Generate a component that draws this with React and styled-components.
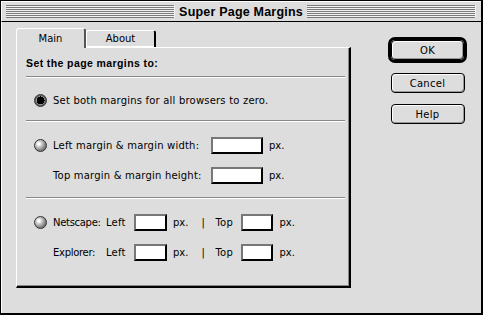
import React from 'react'
import styled, { createGlobalStyle } from 'styled-components'

const Global = createGlobalStyle`
  html, body { margin: 0; padding: 0; background: #dddddd; }
  * { box-sizing: border-box; }
`

const Window = styled.div`
  width: 483px;
  height: 315px;
  background: #dddddd;
  border: 1px solid #000;
  border-right-width: 2px;
  border-bottom-width: 2px;
  display: flex;
  flex-direction: column;
  font-family: "DejaVu Sans", "Liberation Sans", sans-serif;
  font-size: 10px;
  color: #000;
`
const TitleBar = styled.div`
  height: 21px;
  display: flex;
  align-items: center;
  gap: 4px;
  padding: 0 5px 0 4px;
  border-bottom: 1px solid #000;
  border-top: 1px solid #fff;
  border-left: 1px solid #fff;
`
const Stripes = styled.div`
  flex: 1;
  height: 13px;
  background: repeating-linear-gradient(#7a7a7a 0 1px, #f2f2f2 1px 2px);
  border-right: 1px solid #f2f2f2;
`
const Title = styled.div`
  font-family: "Liberation Sans", sans-serif;
  font-weight: bold;
  font-size: 12.5px;
  letter-spacing: 0.2px;
`
const Body = styled.div`
  flex: 1;
  display: flex;
  padding: 6px 0 0 14px;
  border-left: 1px solid #fff;
`
const LeftCol = styled.div`
  width: 335px;
  display: flex;
  flex-direction: column;
`
const TabRow = styled.div`
  display: flex;
  height: 19px;
  align-items: flex-end;
`
const Tab = styled.div`
  width: 70px;
  height: ${p => (p.active ? '20px' : '17px')};
  margin-bottom: ${p => (p.active ? '-1px' : '0')};
  background: #dddddd;
  border-top: 1px solid #fff;
  border-left: 1px solid #fff;
  border-right: 2px solid #000;
  border-right-color: ${p => (p.active ? '#555' : '#000')};
  border-radius: 3px 3px 0 0;
  display: flex;
  align-items: center;
  justify-content: center;
  padding-bottom: 1px;
  position: relative;
  z-index: ${p => (p.active ? 2 : 1)};
  box-shadow: ${p => (p.active ? 'none' : 'inset 0 -1px 0 #fff')};
`
const Panel = styled.div`
  height: 241px;
  border-top: 1px solid #fff;
  border-left: 1px solid #fff;
  border-right: 2px solid #000;
  border-bottom: 2px solid #000;
  box-shadow: inset -1px -1px 0 #888;
  padding: 0 4px 0 9px;
  display: flex;
  flex-direction: column;
`
const Heading = styled.div`
  font-family: "Liberation Sans", sans-serif;
  font-weight: bold;
  font-size: 10.5px;
  height: 28px;
  padding-top: 9px;
  letter-spacing: 0.4px;
`
const Separator = styled.div`
  height: 2px;
  border-top: 1px solid #888;
  border-bottom: 1px solid #fff;
`
const Section = styled.div`
  height: ${p => p.h}px;
  display: flex;
  flex-direction: column;
  gap: ${p => p.gap || 0}px;
  padding-top: ${p => p.pt}px;
`
const Row = styled.div`
  display: flex;
  align-items: center;
  height: 17px;
  padding-left: ${p => (p.indent ? '27px' : '8px')};
`
const Radio = styled.span`
  width: 13px;
  height: 13px;
  border-radius: 50%;
  margin-right: 6px;
  flex: none;
  border: 1px solid #333;
  background: ${p =>
    p.checked
      ? 'radial-gradient(circle at 50% 50%, #000 0 3px, #000 3px 4px, #999 4px)'
      : 'radial-gradient(circle at 35% 35%, #fff 0 1px, #ccc 3px, #777 7px)'};
  box-shadow: ${p => (p.checked ? 'inset 0 0 0 1px #555' : 'none')};
`
const Label = styled.span`
  width: ${p => (p.w ? `${p.w}px` : 'auto')};
  flex: none;
  white-space: nowrap;
  letter-spacing: ${p => (p.tight ? '-0.3px' : '0.2px')};
  color: #000;
`
const Input = styled.span`
  display: inline-block;
  width: ${p => p.w}px;
  height: 17px;
  background: #fff;
  border: 2px solid;
  border-color: #777 #000 #000 #777;
  flex: none;
`
const Unit = styled.span`
  margin-left: 6px;
  margin-right: ${p => p.mr || 0}px;
`
const ButtonCol = styled.div`
  margin-left: 37px;
  padding-top: 9px;
  display: flex;
  flex-direction: column;
  align-items: center;
  width: 79px;
  gap: 11px;
`
const DefaultRing = styled.div`
  width: 79px;
  height: 26px;
  flex: none;
  border: 3px solid #000;
  border-radius: 7px;
  box-shadow: inset 0 0 0 1px #aaa;
  margin-bottom: -1px;
`
const Button = styled.div`
  width: ${p => (p.inner ? '100%' : '74px')};
  height: ${p => (p.inner ? '100%' : '20px')};
  flex: none;
  border: 1px solid #000;
  border-radius: 4px;
  background: #dddddd;
  box-shadow: inset 1px 1px 0 #fff, inset -1px -1px 0 #999;
  display: flex;
  align-items: center;
  justify-content: center;
  letter-spacing: 0.3px;
`

export default function App() {
  return (
    <>
      <Global />
      <Window>
        <TitleBar>
          <Stripes />
          <Title>Super Page Margins</Title>
          <Stripes />
        </TitleBar>
        <Body>
          <LeftCol>
            <TabRow>
              <Tab active>Main</Tab>
              <Tab>About</Tab>
            </TabRow>
            <Panel>
              <Heading>Set the page margins to:</Heading>
              <Separator />
              <Section h={42} pt={14}>
                <Row>
                  <Radio checked />
                  <Label>Set both margins for all browsers to zero.</Label>
                </Row>
              </Section>
              <Separator />
              <Section h={75} pt={15} gap={13}>
                <Row>
                  <Radio />
                  <Label w={158}>Left margin &amp; margin width:</Label>
                  <Input w={52} />
                  <Unit>px.</Unit>
                </Row>
                <Row indent>
                  <Label w={158}>Top margin &amp; margin height:</Label>
                  <Input w={52} />
                  <Unit>px.</Unit>
                </Row>
              </Section>
              <Separator />
              <Section h={80} pt={15} gap={13}>
                <Row>
                  <Radio />
                  <Label w={53} tight>Netscape:</Label>
                  <Label w={28}>Left</Label>
                  <Input w={33} />
                  <Unit mr={13}>px.</Unit>
                  <Label w={14}>|</Label>
                  <Label w={26}>Top</Label>
                  <Input w={32} />
                  <Unit>px.</Unit>
                </Row>
                <Row indent>
                  <Label w={53} tight>Explorer:</Label>
                  <Label w={28}>Left</Label>
                  <Input w={33} />
                  <Unit mr={13}>px.</Unit>
                  <Label w={14}>|</Label>
                  <Label w={26}>Top</Label>
                  <Input w={32} />
                  <Unit>px.</Unit>
                </Row>
              </Section>
            </Panel>
          </LeftCol>
          <ButtonCol>
            <DefaultRing>
              <Button inner>OK</Button>
            </DefaultRing>
            <Button>Cancel</Button>
            <Button>Help</Button>
          </ButtonCol>
        </Body>
      </Window>
    </>
  )
}
